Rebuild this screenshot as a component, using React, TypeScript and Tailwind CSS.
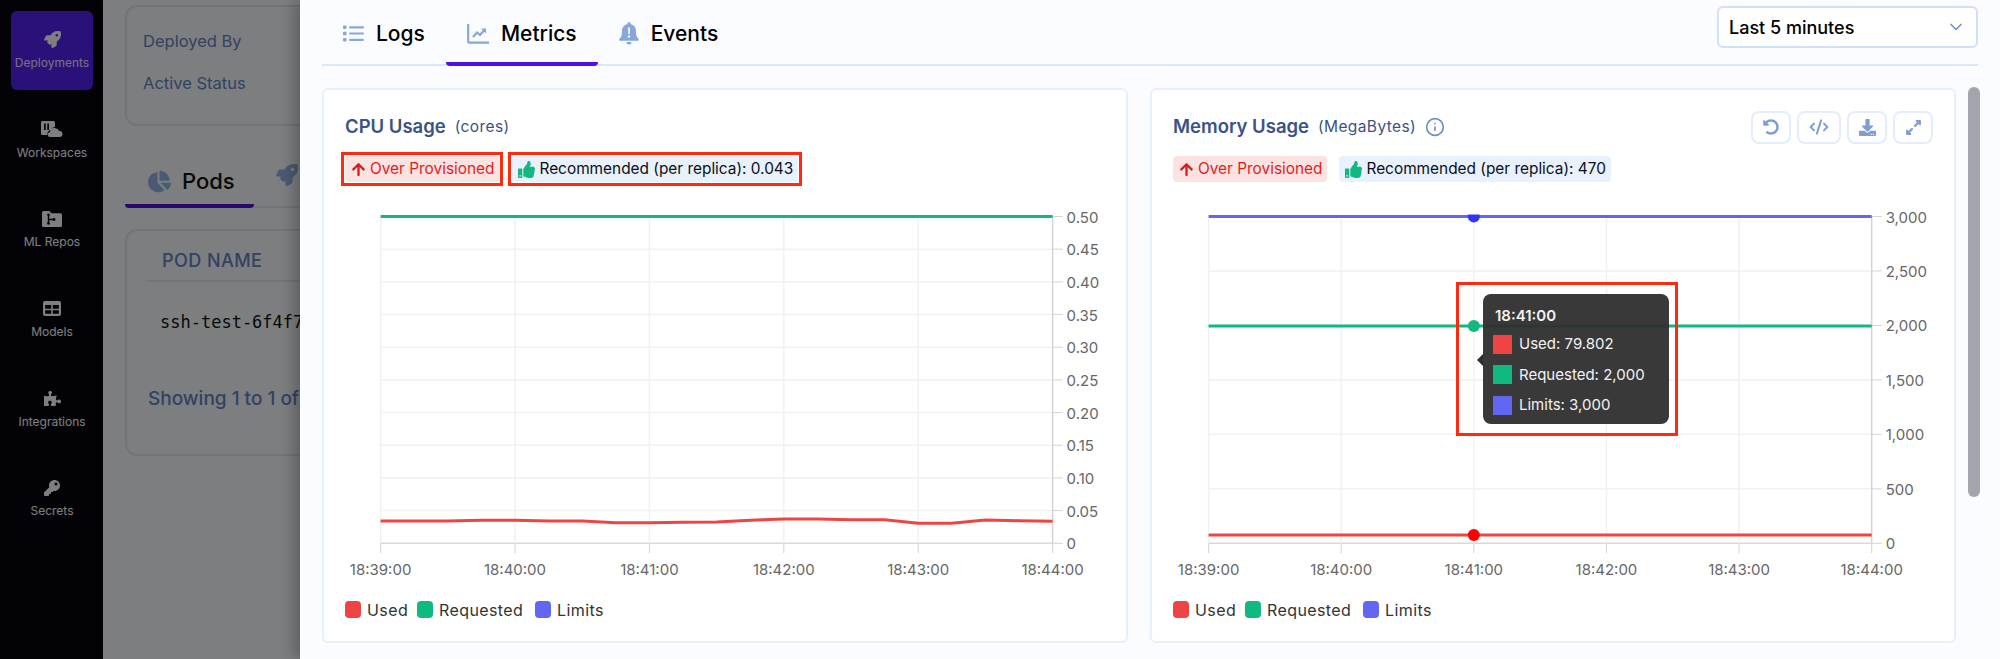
import React from 'react';
import { ChevronDown, CodeXml, Info } from 'lucide-react';
import {
  FaArrowUp,
  FaChartPie,
  FaDownload,
  FaExpandAlt,
  FaKey,
  FaPuzzlePiece,
  FaRocket,
  FaThumbsUp,
  FaUndoAlt,
} from 'react-icons/fa';

const RED = '#ef4444';
const GREEN = '#10b981';
const INDIGO = '#6366f1';

const WorkspaceIcon = () => (
  <svg width="22" height="16" viewBox="0 0 22 16" fill="currentColor">
    <path d="M1.500 0h11A1.500 1.500 0 0 1 14 1.500V6a4.500 4.500 0 0 0-4 3.300A3.400 3.400 0 0 0 6.700 14H1.500A1.500 1.500 0 0 1 0 12.500v-11A1.500 1.500 0 0 1 1.500 0z" />
    <path d="M3 2.500h1.700v6.500H3zM6.300 2.500H8v6.500H6.300z" fill="#06060f" />
    <path d="M14.500 7.200a3.800 3.800 0 0 1 3.500 2.700A3 3 0 0 1 18.800 16H9.500a2.500 2.500 0 0 1-.4-5 3.900 3.900 0 0 1 5.400-3.800z" />
  </svg>
);

const RepoIcon = () => (
  <svg width="20" height="16" viewBox="0 0 20 16">
    <path d="M1.500 0h6l2 2.200h9A1.500 1.500 0 0 1 20 3.700v10.800a1.500 1.500 0 0 1-1.500 1.500h-17A1.500 1.500 0 0 1 0 14.500v-13A1.500 1.500 0 0 1 1.500 0z" fill="currentColor" />
    <path d="M6.500 4v8.500M6.500 8.500h4.500" stroke="#06060f" strokeWidth="1.400" fill="none" />
    <circle cx="6.500" cy="3.800" r="1.300" fill="#06060f" />
    <circle cx="6.500" cy="12.400" r="1.300" fill="#06060f" />
    <circle cx="12" cy="8.500" r="1.400" fill="#06060f" />
  </svg>
);

const ModelsIcon = () => (
  <svg width="18" height="15" viewBox="0 0 18 15">
    <rect width="18" height="15" rx="2" fill="currentColor" />
    <path d="M2.200 4h6v3.800h-6zM9.800 4h6v3.800h-6zM2.200 9.200h6v3.600h-6zM9.800 9.200h6v3.600h-6z" fill="#06060f" />
  </svg>
);

const ListIcon = () => (
  <svg width="21" height="17" viewBox="0 0 21 17" fill="currentColor">
    <rect x="0" y="0.500" width="3.500" height="3.500" rx="0.800" />
    <rect x="0" y="6.700" width="3.500" height="3.500" rx="0.800" />
    <rect x="0" y="13" width="3.500" height="3.500" rx="0.800" />
    <rect x="6" y="1.200" width="15" height="2.200" rx="1" />
    <rect x="6" y="7.400" width="15" height="2.200" rx="1" />
    <rect x="6" y="13.700" width="15" height="2.200" rx="1" />
  </svg>
);

const MetricsIcon = () => (
  <svg width="22" height="20" viewBox="0 0 22 20" fill="none" stroke="currentColor" strokeWidth="2.200">
    <path d="M1.200 0v17a1.500 1.500 0 0 0 1.500 1.700H22" strokeLinecap="round" />
    <path d="M6 13l4-4.500 3 2.500 5-5.500" />
    <path d="M14 4.500h5v5z" fill="currentColor" stroke="none" />
  </svg>
);

const BellIcon = () => (
  <svg width="20" height="23" viewBox="0 0 20 23">
    <path
      d="M10 0a1.600 1.600 0 0 1 1.600 1.600v.7C14.900 3 17 5.600 17 9c0 4.500 1 6.300 2.500 8 .6.700.2 1.800-.8 1.800H1.300c-1 0-1.400-1.100-.8-1.800C2 15.300 3 13.500 3 9c0-3.400 2.100-6 5.400-6.700v-.7A1.600 1.600 0 0 1 10 0z"
      fill="currentColor"
    />
    <path d="M7.500 20h5a2.500 2.500 0 0 1-5 0z" fill="currentColor" />
    <path d="M9 5.500h2l-.3 6.500H9.300z" fill="#fafcff" />
    <circle cx="10" cy="14.500" r="1.200" fill="#fafcff" />
  </svg>
);

const navItems = [
  { label: 'Deployments', icon: <FaRocket size={17} />, active: true },
  { label: 'Workspaces', icon: <WorkspaceIcon /> },
  { label: 'ML Repos', icon: <RepoIcon /> },
  { label: 'Models', icon: <ModelsIcon /> },
  { label: 'Integrations', icon: <FaPuzzlePiece size={17} /> },
  { label: 'Secrets', icon: <FaKey size={16} /> },
];

const Sidebar = () => (
  <aside className="w-[104px] shrink-0 bg-[#06060f] border-r border-white flex flex-col gap-[10.700px] pt-[11px] pl-[11px] pr-[10px]">
    {navItems.map((item) => (
      <div
        key={item.label}
        className={`h-[79px] shrink-0 rounded-md flex flex-col items-center justify-center gap-[7px] text-[12px] leading-[15px] ${
          item.active ? 'bg-[#5522f5] text-[#e9e2ff]' : 'text-white'
        }`}
      >
        <span className="h-[17px] flex items-center text-white">{item.icon}</span>
        <span>{item.label}</span>
      </div>
    ))}
  </aside>
);

// what sits behind the drawer, only its left edge is visible
const BehindDrawer = () => (
  <main className="flex-1 bg-[#fafcff] pl-[21px] pt-[5px] overflow-hidden">
    <div className="h-[121px] w-[600px] border-2 border-[#dfe9fb] rounded-xl pl-[16px] pt-[22px] text-[16.500px] leading-[24px] text-[#6585c4]">
      <div>Deployed By</div>
      <div className="mt-[18px]">Active Status</div>
    </div>
    <div className="mt-[37px] h-[45px] w-[600px] border-b-2 border-[#dfe9fb] flex items-start">
      <div className="w-[129px] h-[45px] shrink-0 flex items-center gap-[11px] pl-[23px] pb-[4px] text-[22px] font-medium text-[#111] border-b-[4px] border-[#4f11d6] rounded-b-sm">
        <FaChartPie size={23} className="text-[#96b4e6]" />
        Pods
      </div>
      <div className="pl-[22px] pt-[1px]">
        <FaRocket size={22} className="text-[#96b4e6]" />
      </div>
    </div>
    <div className="mt-[21px] h-[227px] w-[600px] border-2 border-[#dfe9fb] rounded-xl pt-[18px] pl-[21px]">
      <div className="border-b-2 border-[#dfe9fb] h-[33px] pl-[14px] text-[18px] leading-[24px] font-medium text-[#6585c4] tracking-wide">
        POD NAME
      </div>
      <div className="mt-[30px] pl-[12px] text-[17px] leading-[20px] text-[#111] font-['DejaVu_Sans_Mono',monospace]">ssh-test-6f4f77</div>
      <div className="mt-[54px] text-[19px] leading-[26px] font-medium text-[#6585c4]">Showing 1 to 1 of 1</div>
    </div>
  </main>
);

const Tab = ({ label, icon, active }: { label: string; icon: React.ReactNode; active?: boolean }) => (
  <div
    className={`h-[66px] flex items-center gap-[12px] px-[21px] pt-[5px] text-[21px] font-medium text-black border-b-[4px] rounded-b-sm ${
      active ? 'border-[#5011e0]' : 'border-transparent'
    }`}
  >
    <span className="text-[#88a6d8]">{icon}</span>
    {label}
  </div>
);

const Badge = ({ tone, children }: { tone: 'red' | 'blue'; children: React.ReactNode }) => (
  <div
    className={`h-[26px] flex items-center gap-[4px] pl-[6px] pr-[5px] rounded-[4px] text-[15.400px] ${
      tone === 'red' ? 'bg-[#fde2e2] text-[#e11d1d]' : 'bg-[#e8f1fc] text-[#0b0f19]'
    }`}
  >
    {children}
  </div>
);

// red annotation box drawn around a badge in the screenshot
const Marked = ({ children }: { children: React.ReactNode }) => (
  <div className="-m-[4px] border-[3px] border-[#ff2a0f] p-[1px]">{children}</div>
);

const IconButton = ({ width, children }: { width: string; children: React.ReactNode }) => (
  <div className={`${width} h-[33px] border-2 border-[#e3edfc] rounded-lg flex items-center justify-center text-[#7f9ed2]`}>
    {children}
  </div>
);

interface ChartProps {
  id: string;
  left: number;
  right: number;
  yLabels: string[];
  series: { color: string; points: [number, number][] }[];
  markerX?: number;
}

const TOP = 16.5;
const BOTTOM = 343.3;
const times = ['18:39:00', '18:40:00', '18:41:00', '18:42:00', '18:43:00', '18:44:00'];

const Chart = ({ id, left, right, yLabels, series, markerX }: ChartProps) => {
  const xStep = (right - left) / 5;
  const yStep = (BOTTOM - TOP) / (yLabels.length - 1);
  return (
    <svg className="block w-[802px] h-[390px]" viewBox="0 0 802 390">
      <defs>
        <clipPath id={id}>
          <rect x="0" y={TOP - 2} width="802" height={BOTTOM - TOP + 12} />
        </clipPath>
      </defs>
      {yLabels.map((label, i) => {
        const y = BOTTOM - i * yStep;
        return (
          <g key={label}>
            <line x1={left} x2={right} y1={y} y2={y} stroke={i === 0 ? '#d9d9d9' : '#f1f1f1'} strokeWidth="1.500" />
            <line x1={right} x2={right + 10} y1={y} y2={y} stroke="#d4d4d4" />
            <text x={right + 14} y={y + 6} fontSize="15" fill="#666">
              {label}
            </text>
          </g>
        );
      })}
      {times.map((t, i) => {
        const x = left + i * xStep;
        return (
          <g key={t}>
            <line x1={x} x2={x} y1={TOP} y2={BOTTOM} stroke={i === 5 ? '#d4d4d4' : '#f1f1f1'} strokeWidth="1.500" />
            <line x1={x} x2={x} y1={BOTTOM} y2={BOTTOM + 10} stroke="#d4d4d4" />
            <text x={x} y={375} textAnchor="middle" fontSize="15" fill="#666">
              {t}
            </text>
          </g>
        );
      })}
      <g clipPath={`url(#${id})`}>
        {series.map((s) => (
          <polyline key={s.color} points={s.points.map((p) => p.join(',')).join(' ')} fill="none" stroke={s.color} strokeWidth="3" />
        ))}
        {markerX !== undefined && (
          <>
            <circle cx={markerX} cy={TOP} r="6" fill="#3333ff" />
            <circle cx={markerX} cy={125.9} r="6" fill={GREEN} />
            <circle cx={markerX} cy={335} r="6" fill="#ff0000" />
          </>
        )}
      </g>
    </svg>
  );
};

const Legend = () => (
  <div className="mt-[11px] pl-[21px] flex items-center text-[16px] tracking-[0.4px] text-[#333] h-[17px]">
    <span className="w-[16px] h-[17px] rounded bg-[#ef4444] mr-[6px]" />
    <span className="w-[50px]">Used</span>
    <span className="w-[16px] h-[17px] rounded bg-[#10b981] mr-[6px]" />
    <span className="w-[96px]">Requested</span>
    <span className="w-[16px] h-[17px] rounded bg-[#6366f1] mr-[6px]" />
    <span>Limits</span>
  </div>
);

const cpuUsed = [123, 123, 123, 121, 121, 123, 123, 128, 128, 127, 126, 121, 117, 117, 119, 119, 130, 130, 120, 122, 124];

const Card = ({ children }: { children: React.ReactNode }) => (
  <section className="flex-1 h-[555px] bg-white border-2 border-[#e6effc] rounded-md overflow-hidden">{children}</section>
);

const CardTitle = ({ title, unit, info }: { title: string; unit: string; info?: boolean }) => (
  <div className="flex items-center gap-[9px] text-[#3b5285]">
    <span className="text-[18.500px] font-semibold">{title}</span>
    <span className="text-[15.500px] tracking-wide">{unit}</span>
    {info && <Info size={20} className="text-[#6f90c8]" />}
  </div>
);

const Drawer = () => {
  const cpuLeft = 56.6;
  const cpuRight = 728.6;
  const memLeft = 56.6;
  const memRight = 719.7;
  return (
    <div className="absolute top-0 right-0 bottom-0 w-[1700px] bg-[#fafcff] shadow-[-6px_0_14px_rgba(0,0,0,0.25)] overflow-hidden">
      <div className="ml-[22px] mr-[22px] h-[66px] border-b-2 border-[#dbe8fb] flex justify-between">
        <div className="flex">
          <Tab label="Logs" icon={<ListIcon />} />
          <Tab label="Metrics" active icon={<MetricsIcon />} />
          <Tab label="Events" icon={<BellIcon />} />
        </div>
        <div className="mt-[6px] w-[261px] h-[42px] bg-white border-2 border-[#cfe0f8] rounded-md flex items-center justify-between pl-[10px] pr-[10px] text-[18px] font-medium text-black">
          Last 5 minutes
          <ChevronDown size={20} className="text-[#6f90c8]" />
        </div>
      </div>
      <div className="mt-[22px] ml-[22px] mr-[44px] flex gap-[22px]">
        <Card>
          <div className="px-[21px] pt-[20px] h-[54px] flex items-center">
            <CardTitle title="CPU Usage" unit="(cores)" />
          </div>
          <div className="px-[21px] mt-[12px] flex gap-[13px]">
            <Marked>
              <Badge tone="red">
                <FaArrowUp size={15} className="text-[#d91c1c]" />
                Over Provisioned
              </Badge>
            </Marked>
            <Marked>
              <Badge tone="blue">
                <FaThumbsUp size={17} className="text-[#10b981]" />
                Recommended (per replica): 0.043
              </Badge>
            </Marked>
          </div>
          <div className="mt-[18px]">
            <Chart
              id="cpu"
              left={cpuLeft}
              right={cpuRight}
              yLabels={['0', '0.05', '0.10', '0.15', '0.20', '0.25', '0.30', '0.35', '0.40', '0.45', '0.50']}
              series={[
                { color: GREEN, points: [[cpuLeft, TOP], [cpuRight, TOP]] },
                {
                  color: RED,
                  points: cpuUsed.map((v, i): [number, number] => [cpuLeft + (i * (cpuRight - cpuLeft)) / 20, 280 + v / 3]),
                },
              ]}
            />
          </div>
          <Legend />
        </Card>

        <Card>
          <div className="pl-[21px] pr-[21px] pt-[20px] h-[54px] flex items-center justify-between">
            <CardTitle title="Memory Usage" unit="(MegaBytes)" info />
            <div className="flex gap-[6px]">
              <IconButton width="w-[40px]">
                <FaUndoAlt size={16} />
              </IconButton>
              <IconButton width="w-[44px]">
                <CodeXml size={20} strokeWidth={2.4} />
              </IconButton>
              <IconButton width="w-[40px]">
                <FaDownload size={17} />
              </IconButton>
              <IconButton width="w-[40px]">
                <FaExpandAlt size={17} />
              </IconButton>
            </div>
          </div>
          <div className="px-[21px] mt-[12px] flex gap-[12px]">
            <Badge tone="red">
              <FaArrowUp size={15} className="text-[#d91c1c]" />
              Over Provisioned
            </Badge>
            <Badge tone="blue">
              <FaThumbsUp size={17} className="text-[#10b981]" />
              Recommended (per replica): 470
            </Badge>
          </div>
          <div className="mt-[18px]">
            <Chart
              id="mem"
              left={memLeft}
              right={memRight}
              yLabels={['0', '500', '1,000', '1,500', '2,000', '2,500', '3,000']}
              markerX={memLeft + (2 * (memRight - memLeft)) / 5}
              series={[
                { color: INDIGO, points: [[memLeft, TOP], [memRight, TOP]] },
                { color: GREEN, points: [[memLeft, 125.9], [memRight, 125.9]] },
                { color: RED, points: [[memLeft, 335], [memRight, 335]] },
              ]}
            />
          </div>
          <Legend />
        </Card>
      </div>

      {/* chart tooltip and its marker */}
      <div className="absolute left-[1156px] top-[282px] w-[222px] h-[154px] border-[3px] border-[#ff2a0f]" />
      <div className="absolute left-[1183px] top-[294px] w-[186px] h-[130px] rounded-lg bg-[#2e2e2e]/95 text-[#f2f2f2] text-[15px] pl-[10px] pt-[10px]">
        <span className="absolute -left-[6px] top-[60px] w-0 h-0 border-y-[6px] border-y-transparent border-r-[6px] border-r-[#2e2e2e]" />
        <div className="pl-[2px] font-semibold h-[25px] leading-[24px]">18:41:00</div>
        {[
          ['Used: 79.802', 'bg-[#ef4444]'],
          ['Requested: 2,000', 'bg-[#10b981]'],
          ['Limits: 3,000', 'bg-[#6366f1]'],
        ].map(([text, color]) => (
          <div key={text} className="flex items-center gap-[7px] h-[30.500px]">
            <span className={`w-[19px] h-[19px] ${color}`} />
            {text}
          </div>
        ))}
      </div>

      {/* scrollbar thumb */}
      <div className="absolute left-[1668px] top-[87px] w-[12px] h-[410px] rounded-md bg-[#a3a5ad]" />
    </div>
  );
};

export default function App() {
  return (
    <div className="relative w-[2000px] h-[659px] flex overflow-hidden font-['Inter','Noto_Sans',sans-serif]">
      <Sidebar />
      <BehindDrawer />
      <div className="absolute inset-0 bg-black/50" />
      <Drawer />
    </div>
  );
}
